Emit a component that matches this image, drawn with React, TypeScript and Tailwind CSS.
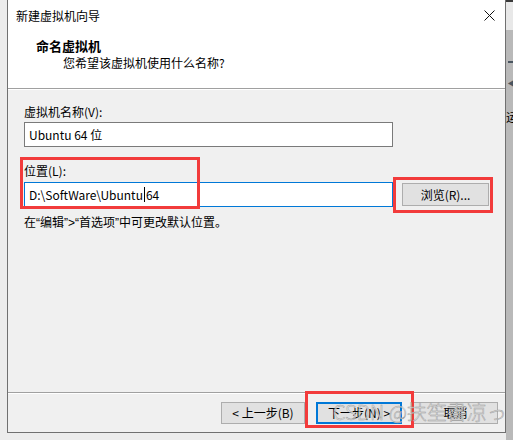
const font = "font-['Noto_Sans_CJK_SC','Microsoft_YaHei',sans-serif]"
const q = "font-['Liberation_Sans',sans-serif]"

function WinButton({ label, w, primary }: { label: string; w: string; primary?: boolean }) {
  return (
    <div
      className={`${w} h-[22px] flex items-center justify-center text-[12px] text-black bg-[#e1e1e1] ${
        primary ? "border-2 border-[#0078d7]" : "border border-[#adadad]"
      }`}
    >
      {label}
    </div>
  )
}

export default function App() {
  return (
    <div className={`relative w-[513px] h-[440px] overflow-hidden bg-[#ececec] flex ${font}`}>
      <div className="w-[7px] shrink-0" />

      {/* dialog */}
      <div className="w-[499px] h-[433px] shrink-0 flex flex-col bg-[#f0f0f0] border-x border-b border-[#707070]">
        {/* title + header */}
        <div className="h-[88px] bg-white flex flex-col">
          <div className="h-[31px] flex items-center justify-between pl-[8px] pr-[10px]">
            <span className="text-[12px] text-black leading-none">新建虚拟机向导</span>
            <svg width="11" height="11" viewBox="0 0 11 11">
              <path d="M0.5 0.5 L10.5 10.5 M10.5 0.5 L0.5 10.5" stroke="#111" strokeWidth="1" fill="none" />
            </svg>
          </div>
          <div className="mt-[7px] pl-[28px] text-[13px] leading-[16px] font-bold text-black">命名虚拟机</div>
          <div className="mt-[1px] pl-[55px] text-[12px] leading-[16px] text-black">您希望该虚拟机使用什么名称?</div>
        </div>
        <div className="h-[2px] border-t border-[#a0a0a0] border-b border-b-white" />

        {/* body */}
        <div className="flex-1 flex flex-col pl-[16px] text-[12px] text-black">
          <div className="mt-[14px] leading-[16px]">虚拟机名称(V):</div>
          <div className="mt-[2px] w-[369px] h-[25px] bg-white border border-[#7a7a7a] flex items-center pl-[4px] leading-none">
            Ubuntu 64 位
          </div>
          <div className="mt-[16px] leading-[16px]">位置(L):</div>
          <div className="mt-[3px] flex items-center">
            <div className="w-[369px] h-[25px] bg-white border border-[#0078d7] flex items-center pl-[4px] leading-none">
              <span>D:\SoftWare\Ubuntu</span>
              <span className="w-px h-[15px] bg-black mx-[1px]" />
              <span>64</span>
            </div>
            <div className="ml-[9px] w-[87px] h-[23px] bg-[#e1e1e1] border border-[#adadad] flex items-center justify-center">
              浏览(R)...
            </div>
          </div>
          <div className="mt-[7px] leading-[16px]">
            在<span className={q}>“</span>编辑<span className={q}>”&gt;“</span>首选项<span className={q}>”</span>中可更改默认位置。
          </div>
        </div>

        <div className="h-[2px] border-t border-[#a0a0a0] border-b border-b-white" />

        {/* footer */}
        <div className="h-[38px] flex items-start justify-end pt-[8px] pr-[7px] gap-[11px]">
          <WinButton label="< 上一步(B)" w="w-[84px]" />
          <WinButton label="下一步(N) >" w="w-[86px]" primary />
          <WinButton label="取消" w="w-[85px]" />
        </div>
      </div>

      {/* background window peeking out on the right */}
      <div className="flex-1 flex flex-col bg-[#b9b9b9]">
        <div className="h-[2px] bg-[#3a3a3a]" />
        <div className="h-[28px] bg-[#e8e8e8]" />
        <div className="h-[31px]" />
        <div className="h-[2px] w-[5px] ml-[2px] bg-[#4a5560]" />
        <div className="mt-[12px] ml-[1px] text-[14px] leading-none text-[#4a5560]">◀</div>
        <div className="mt-[22px] text-[12px] leading-none text-black">运</div>
      </div>

      {/* annotation boxes */}
      <div className="absolute left-[20px] top-[157px] w-[180px] h-[52px] border-[3px] border-[#f23b3b]" />
      <div className="absolute left-[393px] top-[177px] w-[100px] h-[36px] border-[3px] border-[#f23b3b]" />
      <div className="absolute left-[305px] top-[391px] w-[109px] h-[37px] border-[3px] border-[#f23b3b]" />

      {/* watermark */}
      <div className="absolute left-[333px] top-[400px] text-[20px] leading-[24px] font-light text-white/70 [-webkit-text-stroke:0.5px_#9a9a9a] whitespace-nowrap">
        CSDN @扶笙書凉っ
      </div>
    </div>
  )
}
